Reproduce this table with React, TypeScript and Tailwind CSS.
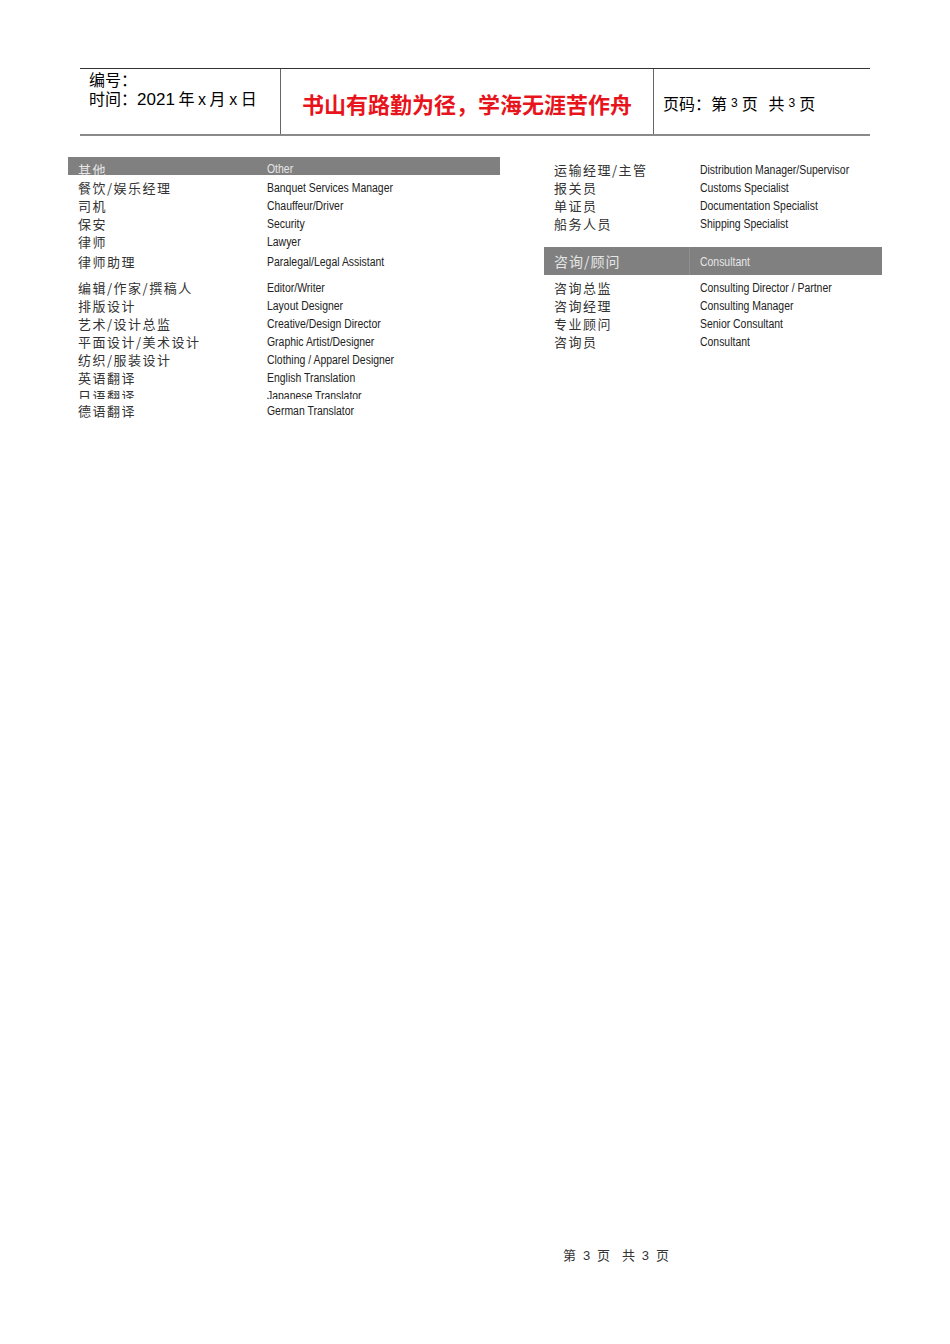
const cn = "font-['Noto_Sans_CJK_SC',sans-serif]";
const en = "font-['Liberation_Sans',Arial,sans-serif]";
// the reference uses a narrow face; squeeze Liberation Sans to fit
const narrow = "inline-block origin-left scale-x-[0.87] whitespace-nowrap";

type Row = { zh: string; en: string; h: string; clip?: boolean };

const left: Row[] = [
  { zh: "餐饮/娱乐经理", en: "Banquet Services Manager", h: "h-[18px]" },
  { zh: "司机", en: "Chauffeur/Driver", h: "h-[18px]" },
  { zh: "保安", en: "Security", h: "h-[18px]" },
  { zh: "律师", en: "Lawyer", h: "h-[18px]" },
  { zh: "律师助理", en: "Paralegal/Legal Assistant", h: "h-[22px]" },
];

const left2: Row[] = [
  { zh: "编辑/作家/撰稿人", en: "Editor/Writer", h: "h-[18px]" },
  { zh: "排版设计", en: "Layout Designer", h: "h-[18px]" },
  { zh: "艺术/设计总监", en: "Creative/Design Director", h: "h-[18px]" },
  { zh: "平面设计/美术设计", en: "Graphic Artist/Designer", h: "h-[18px]" },
  { zh: "纺织/服装设计", en: "Clothing / Apparel Designer", h: "h-[18px]" },
  { zh: "英语翻译", en: "English Translation", h: "h-[18px]" },
  { zh: "日语翻译", en: "Japanese Translator", h: "h-[12px]", clip: true },
  { zh: "德语翻译", en: "German Translator", h: "h-[24px]" },
];

const right: Row[] = [
  { zh: "运输经理/主管", en: "Distribution Manager/Supervisor", h: "h-[18px]" },
  { zh: "报关员", en: "Customs Specialist", h: "h-[18px]" },
  { zh: "单证员", en: "Documentation Specialist", h: "h-[18px]" },
  { zh: "船务人员", en: "Shipping Specialist", h: "h-[18px]" },
];

const right2: Row[] = [
  { zh: "咨询总监", en: "Consulting Director / Partner", h: "h-[18px]" },
  { zh: "咨询经理", en: "Consulting Manager", h: "h-[18px]" },
  { zh: "专业顾问", en: "Senior Consultant", h: "h-[18px]" },
  { zh: "咨询员", en: "Consultant", h: "h-[18px]" },
];

function Rows({ rows, col }: { rows: Row[]; col: string }) {
  return (
    <>
      {rows.map((r) => (
        <div
          key={r.zh}
          className={`flex ${r.h} ${r.clip ? "overflow-hidden items-start pt-[3px]" : "items-center"} text-[#222]`}
        >
          <span className={`${col} shrink-0 pl-[10px] -mt-[1px] text-[13px] leading-none tracking-[1.5px] text-[#333] ${cn}`}>
            {r.zh}
          </span>
          <span className={`text-[12px] leading-none ${en} ${narrow}`}>{r.en}</span>
        </div>
      ))}
    </>
  );
}

export default function App() {
  return (
    <div className="relative h-[1344px] w-[950px] bg-white">
      <div className="pt-[68px] pl-[80px]">
        <div className="flex h-[68px] w-[790px] border-t border-b-2 border-t-[#333] border-b-[#8a8a8a]">
          <div className={`w-[201px] border-r border-[#666] pl-[9px] pt-[1px] text-[16px] leading-[19px] text-black ${cn}`}>
            <div>编号：</div>
            <div>
              时间：<span className={`${en} text-[17px]`}>2021</span> 年 <span className={en}>x</span> 月{" "}
              <span className={en}>x</span> 日
            </div>
          </div>
          <div className="flex w-[373px] items-center justify-center border-r border-[#666] pt-[3px]">
            <span className={`text-[22px] font-bold text-[#e8141c] ${cn}`}>书山有路勤为径，学海无涯苦作舟</span>
          </div>
          <div className={`flex flex-1 items-center pl-[9px] pt-[2px] text-[16px] text-black ${cn}`}>
            页码：第 <span className={`${en} px-[4px] text-[12px]`}>3</span>页&nbsp;&nbsp;&nbsp;共{" "}
            <span className={`${en} px-[4px] text-[12px]`}>3</span>页
          </div>
        </div>
      </div>

      <div className="flex pl-[68px] pt-[21px]">
        <div className="w-[432px]">
          <div className="flex h-[18px] items-start overflow-hidden bg-[#808080] pt-[6px] text-[#e6e6e6]">
            <span className={`w-[199px] shrink-0 pl-[10px] text-[13px] leading-none tracking-[1.5px] ${cn}`}>其他</span>
            <span className={`text-[12px] leading-none ${en} ${narrow}`}>Other</span>
          </div>
          <div className="pt-[4px]">
            <Rows rows={left} col="w-[199px]" />
          </div>
          <div className="pt-[6px]">
            <Rows rows={left2} col="w-[199px]" />
          </div>
        </div>

        <div className="ml-[44px] w-[338px] pt-[4px]">
          <Rows rows={right} col="w-[156px]" />
          <div className="mt-[14px] flex h-[28px] items-center bg-[#808080] text-[#e6e6e6]">
            <span className={`w-[146px] shrink-0 self-stretch border-r border-[#8e8e8e] pl-[10px] pt-[7px] text-[14px] leading-none tracking-[1px] ${cn}`}>
              咨询/顾问
            </span>
            <span className={`ml-[10px] pt-[2px] text-[12px] leading-none ${en} ${narrow}`}>Consultant</span>
          </div>
          <div className="pt-[4px]">
            <Rows rows={right2} col="w-[156px]" />
          </div>
        </div>
      </div>

      <div className={`absolute left-[563px] top-[1248px] text-[13px] leading-none tracking-[2px] text-[#333] ${cn}`}>
        第&nbsp;<span className={en}>3</span>&nbsp;页&nbsp;&nbsp;共&nbsp;<span className={en}>3</span>&nbsp;页
      </div>
    </div>
  );
}
